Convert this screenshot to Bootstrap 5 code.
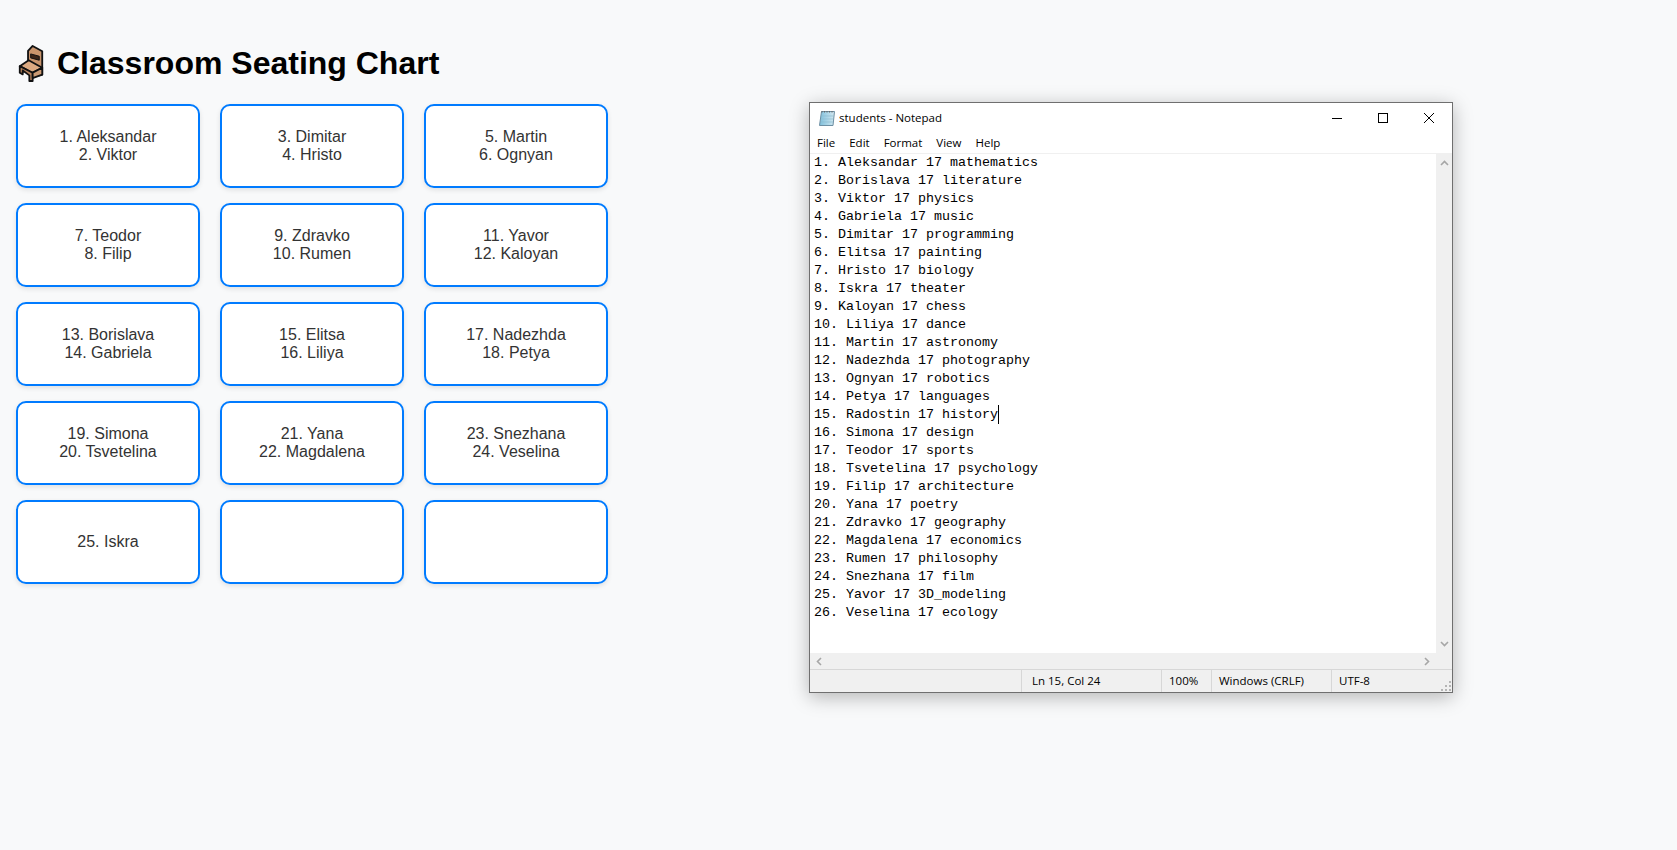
<!DOCTYPE html>
<html lang="en">
<head>
  <meta charset="UTF-8" />
  <meta name="viewport" content="width=device-width, initial-scale=1.0"/>
  <title>Classroom Seating Chart</title>
  <link href="https://cdn.jsdelivr.net/npm/bootstrap@5.3.0/dist/css/bootstrap.min.css" rel="stylesheet"/>
  <style>
    html, body { height: 100%; }
    body {
      background-color: #f8f9fa;
      font-family: "Liberation Sans", Arial, sans-serif;
      color: #333;
    }

    .page-wrap { padding-left: 16px; }

    /* seating chart */
    .chart-side { width: 592px; padding-top: 44px; }
    .chart-title {
      font-family: "Liberation Sans", Arial, sans-serif;
      font-size: 32px;
      font-weight: 700;
      line-height: 38px;
      color: #000;
      margin: 0 0 22px 0;
      padding-left: 2px;
      gap: 13px;
    }
    .seat-grid {
      display: grid;
      grid-template-columns: repeat(3, 184px);
      column-gap: 20px;
      row-gap: 15px;
    }
    .seat-desk {
      height: 84px;
      background-color: #fff;
      border: 2px solid #007bff;
      border-radius: 10px;
      box-shadow: 0 2px 5px rgba(0,0,0,0.1);
      font-size: 16px;
      line-height: 18px;
      text-align: center;
    }

    /* notepad window */
    .np-window {
      width: 644px;
      height: 591px;
      margin-top: 102px;
      margin-left: 201px;
      background-color: #fff;
      border: 1px solid #6f6f6f;
      box-shadow: 0 4px 18px rgba(0,0,0,0.28);
      font-family: "Open Sans", "Noto Sans", sans-serif;
      font-size: 11.5px;
      color: #000;
    }
    .np-titlebar { height: 30px; padding-left: 8px; }
    .np-titlebar .np-name { line-height: 30px; margin-left: 3px; }
    .np-ctrl { width: 46px; height: 30px; }
    .np-menu { height: 20px; padding-left: 4px; line-height: 20px; gap: 8px; }
    .np-menu span { padding: 0 3px; }
    .np-body { min-height: 0; border-top: 1px solid #f0f0f0; }
    .np-text {
      margin: 0;
      padding: 0 0 0 4px;
      font-family: "Liberation Mono", "Courier New", monospace;
      font-size: 13.33px;
      line-height: 18px;
      color: #000;
      overflow: hidden;
    }
    .np-caret { border-right: 1px solid #000; padding: 2px 0; }
    .np-vbar {
      width: 16px;
      background-color: #f0f0f0;
      padding: 6px 0;
    }
    .np-hbar {
      height: 16px;
      background-color: #f0f0f0;
      padding: 0 22px 0 6px;
    }
    .np-status {
      height: 23px;
      background-color: #f0f0f0;
      border-top: 1px solid #d7d7d7;
      line-height: 22px;
    }
    .np-cell { border-left: 1px solid #d7d7d7; padding-left: 7px; }
    .np-w1 { width: 140px; padding-left: 10px; }
    .np-w2 { width: 50px; }
    .np-w3 { width: 120px; }
    .np-w4 { width: 121px; }
    .np-grip { right: 1px; bottom: 1px; }
  </style>
</head>
<body>
<div class="page-wrap d-flex align-items-start">

  <!-- Seating chart -->
  <div class="chart-side flex-shrink-0">
    <h1 class="chart-title d-flex align-items-center">
      <svg width="26" height="38" viewBox="28 25 78 115" aria-hidden="true">
        <g stroke="#111" stroke-width="5.5" stroke-linejoin="round">
          <path d="M58 82 V46 L72 31 L101 47 V118 L92 120 V100 Z" fill="#c8946c"/>
          <path d="M66 55 L92 62 V74 L66 67 Z" fill="#3a2418" stroke-width="3"/>
          <path d="M33 92 L60 74 L101 97 L70 112 Z" fill="#dcaa82"/>
          <path d="M33 92 V112 L42 117 V105 L62 120 V137 L72 137 V112 L33 92 Z" fill="#b9845e"/>
          <path d="M72 112 L101 97 V118 L72 128 Z" fill="#cb9a73"/>
        </g>
      </svg>
      <span>Classroom Seating Chart</span>
    </h1>
    <div class="seat-grid" id="seat-grid"></div>
  </div>

  <!-- Notepad -->
  <div class="np-window flex-shrink-0 d-flex flex-column position-relative">
    <div class="np-titlebar d-flex align-items-center">
      <svg width="18" height="18" viewBox="0 0 18 18" aria-hidden="true">
        <defs>
          <linearGradient id="np-page" x1="0" y1="0" x2="1" y2="0">
            <stop offset="0" stop-color="#7fc0dc"/>
            <stop offset="1" stop-color="#d3e8f1"/>
          </linearGradient>
        </defs>
        <path d="M3.5 2.5 H16.5 L15 16.5 H1.5 Z" fill="url(#np-page)" stroke="#6d8fa3"/>
        <path d="M4 2 V3.5 M6.5 2 V3.5 M9 2 V3.5 M11.5 2 V3.5 M14 2 V3.5" stroke="#666"/>
        <path d="M3.2 7 H15.5 M3 10 H15.2 M2.7 13 H14.9" stroke="#8dbbd0" stroke-width=".7"/>
      </svg>
      <span class="np-name flex-grow-1">students - Notepad</span>
      <div class="np-ctrl d-flex align-items-center justify-content-center">
        <svg width="10" height="10" viewBox="0 0 10 10"><path d="M0 5.5 H10" stroke="#000"/></svg>
      </div>
      <div class="np-ctrl d-flex align-items-center justify-content-center">
        <svg width="10" height="10" viewBox="0 0 10 10"><rect x=".5" y=".5" width="9" height="9" fill="none" stroke="#000"/></svg>
      </div>
      <div class="np-ctrl d-flex align-items-center justify-content-center">
        <svg width="10" height="10" viewBox="0 0 10 10"><path d="M0 0 L10 10 M10 0 L0 10" stroke="#000"/></svg>
      </div>
    </div>
    <div class="np-menu d-flex">
      <span>File</span><span>Edit</span><span>Format</span><span>View</span><span>Help</span>
    </div>
    <div class="np-body flex-grow-1 d-flex">
      <pre class="np-text flex-grow-1" id="np-text"></pre>
      <div class="np-vbar d-flex flex-column justify-content-between align-items-center">
        <svg width="9" height="6" viewBox="0 0 9 6"><path d="M1 5 L4.5 1.5 L8 5" fill="none" stroke="#a6a6a6" stroke-width="1.6"/></svg>
        <svg width="9" height="6" viewBox="0 0 9 6"><path d="M1 1 L4.5 4.5 L8 1" fill="none" stroke="#a6a6a6" stroke-width="1.6"/></svg>
      </div>
    </div>
    <div class="np-hbar d-flex justify-content-between align-items-center">
      <svg width="6" height="9" viewBox="0 0 6 9"><path d="M5 1 L1.5 4.5 L5 8" fill="none" stroke="#a6a6a6" stroke-width="1.6"/></svg>
      <svg width="6" height="9" viewBox="0 0 6 9"><path d="M1 1 L4.5 4.5 L1 8" fill="none" stroke="#a6a6a6" stroke-width="1.6"/></svg>
    </div>
    <div class="np-status d-flex">
      <div class="flex-grow-1"></div>
      <div class="np-cell np-w1">Ln 15, Col 24</div>
      <div class="np-cell np-w2">100%</div>
      <div class="np-cell np-w3">Windows (CRLF)</div>
      <div class="np-cell np-w4">UTF-8</div>
    </div>
    <svg class="np-grip position-absolute" width="10" height="10" viewBox="0 0 10 10" aria-hidden="true">
      <path d="M8 0h2v2H8z M4 4h2v2H4z M8 4h2v2H8z M0 8h2v2H0z M4 8h2v2H4z M8 8h2v2H8z" fill="#b5b5b5"/>
    </svg>
  </div>
</div>

<script>
  const seats = [
    ['1. Aleksandar', '2. Viktor'], ['3. Dimitar', '4. Hristo'], ['5. Martin', '6. Ognyan'],
    ['7. Teodor', '8. Filip'], ['9. Zdravko', '10. Rumen'], ['11. Yavor', '12. Kaloyan'],
    ['13. Borislava', '14. Gabriela'], ['15. Elitsa', '16. Liliya'], ['17. Nadezhda', '18. Petya'],
    ['19. Simona', '20. Tsvetelina'], ['21. Yana', '22. Magdalena'], ['23. Snezhana', '24. Veselina'],
    ['25. Iskra'], [], []
  ];
  const grid = document.getElementById('seat-grid');
  seats.forEach(function(names) {
    const desk = document.createElement('div');
    desk.className = 'seat-desk d-flex flex-column align-items-center justify-content-center';
    names.forEach(function(n) {
      const line = document.createElement('div');
      line.textContent = n;
      desk.appendChild(line);
    });
    grid.appendChild(desk);
  });

  const students = [
    '1. Aleksandar 17 mathematics', '2. Borislava 17 literature', '3. Viktor 17 physics',
    '4. Gabriela 17 music', '5. Dimitar 17 programming', '6. Elitsa 17 painting',
    '7. Hristo 17 biology', '8. Iskra 17 theater', '9. Kaloyan 17 chess',
    '10. Liliya 17 dance', '11. Martin 17 astronomy', '12. Nadezhda 17 photography',
    '13. Ognyan 17 robotics', '14. Petya 17 languages', '15. Radostin 17 history',
    '16. Simona 17 design', '17. Teodor 17 sports', '18. Tsvetelina 17 psychology',
    '19. Filip 17 architecture', '20. Yana 17 poetry', '21. Zdravko 17 geography',
    '22. Magdalena 17 economics', '23. Rumen 17 philosophy', '24. Snezhana 17 film',
    '25. Yavor 17 3D_modeling', '26. Veselina 17 ecology'
  ];
  const text = document.getElementById('np-text');
  students.forEach(function(s, i) {
    const line = document.createElement('span');
    line.textContent = s;
    if (i === 14) line.className = 'np-caret';
    text.appendChild(line);
    text.appendChild(document.createTextNode('\n'));
  });
</script>
</body>
</html>
